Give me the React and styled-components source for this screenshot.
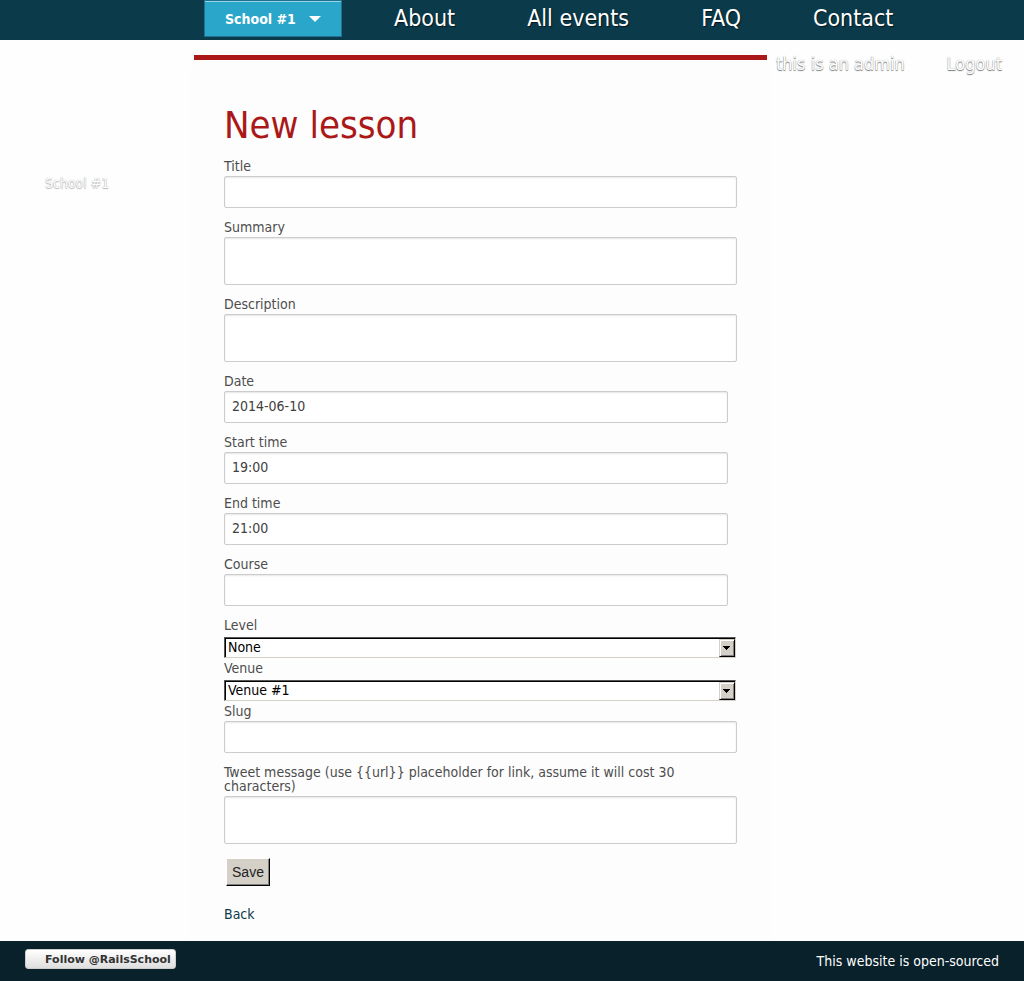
import React from "react";
import styled, { createGlobalStyle, css } from "styled-components";

const GlobalStyle = createGlobalStyle`
  *, *::before, *::after { box-sizing: border-box; }
  body {
    margin: 0;
    background: #fefefe;
    color: #4d4d4d;
    font-family: "DejaVu Sans Condensed", "DejaVu Sans", sans-serif;
    font-size: 14px;
    line-height: 14px;
  }
`;

const Page = styled.div`
  display: flex;
  flex-direction: column;
  min-height: 100vh;
`;

const TopBar = styled.header`
  display: flex;
  align-items: flex-start;
  gap: 52px;
  height: 40px;
  padding-left: 204px;
  background: #0b3a4b;
`;

const SchoolButton = styled.button`
  display: flex;
  align-items: center;
  gap: 13px;
  height: 37px;
  width: 138px;
  flex: none;
  padding: 0 0 0 20px;
  border: 1px solid #1e728f;
  background: #2ba6cb;
  box-shadow: inset 0 1px 0 rgba(255, 255, 255, 0.5);
  color: #fff;
  font: bold 14px/14px "DejaVu Sans Condensed", "DejaVu Sans", sans-serif;
  white-space: nowrap;
`;

const Caret = styled.svg`
  display: block;
  width: 12px;
  height: 6px;
`;

const Nav = styled.nav`
  display: flex;
  gap: 72px;
`;

const NavLink = styled.a`
  color: #fff;
  font-size: 23px;
  line-height: 36px;
  text-decoration: none;
  text-shadow: 1px 1px 1px rgba(0, 0, 0, 0.6);
  white-space: nowrap;
`;

const Body = styled.div`
  display: grid;
  grid-template-columns: 194px minmax(0, 1fr) 257px;
  flex: 1;
`;

const Sidebar = styled.aside`
  padding: 136px 0 0 45px;
`;

const ghostText = css`
  color: #fff;
  text-decoration: none;
  white-space: nowrap;
`;

const SchoolLink = styled.a`
  ${ghostText}
  text-shadow: 0 0 1px #999, 0 1px 1px #bbb;
`;

const Account = styled.div`
  display: flex;
  justify-content: space-between;
  align-items: flex-start;
  padding: 15px 22px 0 9px;
`;

const AccountLink = styled.a`
  ${ghostText}
  font-size: 18px;
  line-height: 18px;
  text-shadow: 0 0 1px #999, 0 1px 1px #777;
`;

const Panel = styled.main`
  margin-top: 15px;
  padding: 45px 30px 20px;
  border-top: 5px solid #ab1818;
  background: #fdfdfd;
  box-shadow: 0 8px 8px rgba(0, 0, 0, 0.02);
`;

const Heading = styled.h1`
  margin: 0 0 14px;
  color: #ab1818;
  font-size: 38px;
  font-weight: normal;
  line-height: 40px;
`;

const Field = styled.div`
  display: flex;
  flex-direction: column;
  gap: ${(p) => (p.$compact ? "5px" : "3px")};
  margin-bottom: ${(p) => (p.$compact ? "3px" : "12px")};
`;

const Label = styled.label`
  display: block;
`;

const boxStyle = css`
  display: block;
  padding: 6px 7px 8px;
  border: 1px solid #ccc;
  border-radius: 2px;
  background: #fff;
  box-shadow: inset 0 1px 2px rgba(0, 0, 0, 0.1);
  color: #404040;
  font: inherit;
`;

const TextInput = styled.input`
  ${boxStyle}
  width: ${(p) => (p.$narrow ? "calc(100% - 9px)" : "100%")};
  height: 32px;
`;

const TextArea = styled.textarea`
  ${boxStyle}
  width: 100%;
  height: 48px;
  resize: none;
`;

const SelectBox = styled.div`
  position: relative;
  margin-right: 1px;
`;

const Select = styled.select`
  appearance: none;
  display: block;
  width: 100%;
  height: 21px;
  padding: 0 20px 1px 3px;
  border: 1px solid;
  border-color: #555 #d4d0c8 #d4d0c8 #555;
  border-radius: 0;
  background: #fff;
  box-shadow: inset 1px 1px 0 #000;
  color: #000;
  font: inherit;
`;

const SelectArrow = styled.span`
  position: absolute;
  top: 2px;
  right: 1px;
  display: flex;
  align-items: center;
  width: 16px;
  height: 18px;
  padding-left: 3px;
  border: 1px solid #000;
  border-color: #d4d0c8 #000 #000 #d4d0c8;
  background: #d4d0c8;
  box-shadow: inset 1px 1px 0 #fff, inset -1px -1px 0 #808080;
  pointer-events: none;
`;

const ArrowGlyph = styled.svg`
  display: block;
  width: 7px;
  height: 4px;
`;

const SaveButton = styled.button`
  display: block;
  width: 44px;
  height: 28px;
  margin: 14px 0 21px 2px;
  padding: 0;
  border: 1px solid #000;
  border-color: #fff #000 #000 #fff;
  background: #d4d0c8;
  box-shadow: inset -1px -1px 0 #808080;
  color: #222;
  font: 14px/18px "Liberation Sans", Arial, sans-serif;
`;

const BackLink = styled.a`
  display: block;
  color: #0b3a4b;
  text-decoration: none;
`;

const Footer = styled.footer`
  display: flex;
  justify-content: space-between;
  align-items: center;
  height: 40px;
  padding: 0 25px;
  background: #08212b;
`;

const FollowLink = styled.a`
  height: 20px;
  margin-bottom: 4px;
  padding: 1px 4px 0 19px;
  border: 1px solid #ccc;
  border-radius: 3px;
  background: linear-gradient(#fff, #dedede);
  color: #333;
  font: bold 11px/18px "DejaVu Sans", sans-serif;
  text-decoration: none;
  white-space: nowrap;
`;

const SourceLink = styled.a`
  color: #fff;
  text-decoration: none;
`;

const fields = [
  { id: "title", label: "Title" },
  { id: "summary", label: "Summary", kind: "area" },
  { id: "description", label: "Description", kind: "area" },
  { id: "date", label: "Date", value: "2014-06-10", narrow: true },
  { id: "start", label: "Start time", value: "19:00", narrow: true },
  { id: "end", label: "End time", value: "21:00", narrow: true },
  { id: "course", label: "Course", narrow: true },
  { id: "level", label: "Level", kind: "select", value: "None" },
  { id: "venue", label: "Venue", kind: "select", value: "Venue #1" },
  { id: "slug", label: "Slug" },
  {
    id: "tweet",
    label: "Tweet message (use {{url}} placeholder for link, assume it will cost 30 characters)",
    kind: "area",
  },
];

function Control({ id, kind, value, narrow }) {
  if (kind === "area") return <TextArea id={id} />;
  if (kind === "select") {
    return (
      <SelectBox>
        <Select id={id}>
          <option>{value}</option>
        </Select>
        <SelectArrow>
          <ArrowGlyph viewBox="0 0 7 4" aria-hidden="true">
            <path d="M0 0h7v1H6v1H5v1H4v1H3V3H2V2H1V1H0z" fill="#000" />
          </ArrowGlyph>
        </SelectArrow>
      </SelectBox>
    );
  }
  return <TextInput id={id} type="text" defaultValue={value} $narrow={narrow} />;
}

export default function App() {
  return (
    <Page>
      <GlobalStyle />
      <TopBar>
        <SchoolButton type="button">
          School #1
          <Caret viewBox="0 0 12 6" aria-hidden="true">
            <path d="M0 0h12L6 6z" fill="#fff" />
          </Caret>
        </SchoolButton>
        <Nav>
          {["About", "All events", "FAQ", "Contact"].map((name) => (
            <NavLink key={name} href="#">{name}</NavLink>
          ))}
        </Nav>
      </TopBar>
      <Body>
        <Sidebar>
          <SchoolLink href="#">School #1</SchoolLink>
        </Sidebar>
        <Panel>
          <Heading>New lesson</Heading>
          <form onSubmit={(e) => e.preventDefault()}>
            {fields.map((f) => (
              <Field key={f.id} $compact={f.kind === "select"}>
                <Label htmlFor={f.id}>{f.label}</Label>
                <Control {...f} />
              </Field>
            ))}
            <SaveButton type="submit">Save</SaveButton>
          </form>
          <BackLink href="#">Back</BackLink>
        </Panel>
        <Account>
          <AccountLink href="#">this is an admin</AccountLink>
          <AccountLink href="#">Logout</AccountLink>
        </Account>
      </Body>
      <Footer>
        <FollowLink href="#">Follow @RailsSchool</FollowLink>
        <SourceLink href="#">This website is open-sourced</SourceLink>
      </Footer>
    </Page>
  );
}
